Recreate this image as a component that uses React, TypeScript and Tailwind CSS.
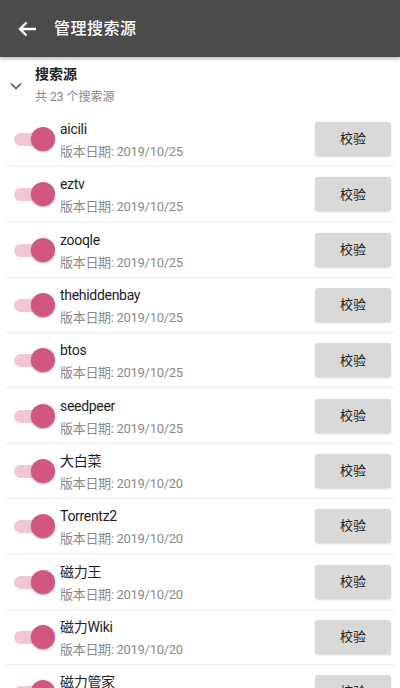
import React from 'react';

const sources = [
    { name: 'aicili', date: '2019/10/25' },
    { name: 'eztv', date: '2019/10/25' },
    { name: 'zooqle', date: '2019/10/25' },
    { name: 'thehiddenbay', date: '2019/10/25' },
    { name: 'btos', date: '2019/10/25' },
    { name: 'seedpeer', date: '2019/10/25' },
    { name: '大白菜', date: '2019/10/20' },
    { name: 'Torrentz2', date: '2019/10/20' },
    { name: '磁力王', date: '2019/10/20' },
    { name: '磁力Wiki', date: '2019/10/20' },
    { name: '磁力管家', date: '2019/10/20' },
];

const Toggle: React.FC = () => (
    <div className="relative w-[42px] h-[24px] flex-shrink-0">
        <div className="absolute left-0 top-[6px] w-[34px] h-[13px] rounded-full bg-[#f3c6d3]"></div>
        <div className="absolute left-[17px] top-0 w-[24px] h-[24px] rounded-full bg-[#d2577e] shadow-[0_1px_2px_rgba(0,0,0,0.3)]"></div>
    </div>
);

const App: React.FC = () => {
    return (
        <div className="w-[400px] h-[688px] overflow-hidden bg-white font-['Roboto','Noto_Sans_CJK_SC',sans-serif]">
            <div className="h-[57px] bg-[#4b4b4b] flex items-center shadow-[0_2px_3px_rgba(0,0,0,0.25)] relative">
                <svg className="ml-[18px]" width="19" height="16" viewBox="0 0 19 16" fill="none">
                    <path d="M18 8H2M8.5 1.5L2 8l6.5 6.5" stroke="#fff" strokeWidth="2.4" />
                </svg>
                <span className="ml-[17px] text-[16px] font-medium text-white tracking-[0.5px]">管理搜索源</span>
            </div>

            <div className="h-[55px] flex items-center">
                <svg className="ml-[10px] mt-[2px]" width="12" height="8" viewBox="0 0 12 8" fill="none">
                    <path d="M1 1.5l5 5 5-5" stroke="#555" strokeWidth="1.6" />
                </svg>
                <div className="ml-[13px] flex flex-col">
                    <span className="text-[14px] font-bold text-[#222] leading-[20px] mt-[1px]">搜索源</span>
                    <span className="text-[12px] text-[#888] leading-[18px] mt-[4px]">共 23 个搜索源</span>
                </div>
            </div>

            <div>
                {sources.map((s) => (
                    <div key={s.name} className="h-[55.3px] mx-[6px] border-b border-[#ececec] flex items-center">
                        <div className="ml-[8px]">
                            <Toggle />
                        </div>
                        <div className="ml-[4px] flex-1 flex flex-col">
                            <span className="text-[14px] text-[#1e1e1e] tracking-[-0.3px] leading-[18px] mt-[3px]">{s.name}</span>
                            <span className="text-[13px] text-[#8a8a8a] tracking-[-0.3px] leading-[18px] mt-[5px]">版本日期: {s.date}</span>
                        </div>
                        <button className="mr-[3px] w-[76px] h-[34px] rounded-[3px] bg-[#d9d9d9] shadow-[0_1px_2px_rgba(0,0,0,0.15)] text-[13px] text-[#222]">
                            校验
                        </button>
                    </div>
                ))}
            </div>
        </div>
    );
};

export default App;
